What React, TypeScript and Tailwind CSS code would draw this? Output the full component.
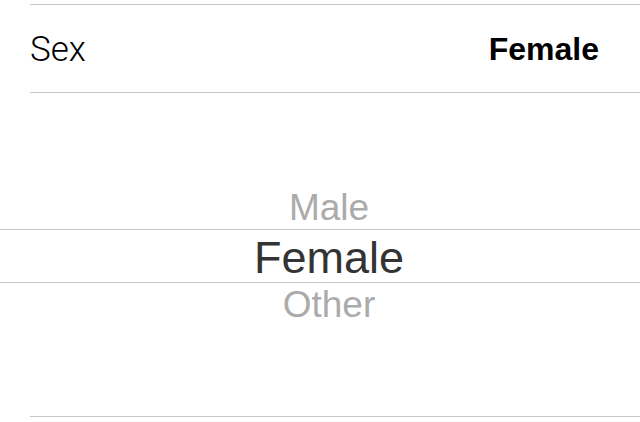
const options = ["Male", "Female", "Other"];

const SexPicker = () => {
  const selected = 1;

  return (
    <div className="w-[640px] h-[422px] overflow-hidden bg-white font-['Liberation_Sans',Arial,sans-serif]">
      <div className="h-[4px]" />
      {/* selected value row */}
      <div className="ml-[30px] h-[89px] border-y border-[#c8c7cc] flex items-center justify-between pr-[41px]">
        <span className="pt-[2px] text-[35px] leading-none font-light text-black font-['Roboto',sans-serif]">
          Sex
        </span>
        <span className="text-[32px] leading-none font-bold text-black">
          {options[selected]}
        </span>
      </div>

      {/* wheel */}
      <div className="h-[323px] flex flex-col items-center pt-[97px] pl-[18px]">
        <div className="mb-[3px] text-[37px] leading-[36px] text-[#ababab]">
          {options[0]}
        </div>
        <div className="-ml-[18px] w-[640px] h-[54px] border-y border-[#c8c7cc] flex justify-center pl-[18px]">
          <span className="pt-[3px] text-[45px] leading-[49px] text-[#333333]">
            {options[1]}
          </span>
        </div>
        <div className="mt-[4px] text-[37px] leading-[36px] text-[#ababab]">
          {options[2]}
        </div>
      </div>
      <div className="ml-[30px] border-b border-[#c8c7cc]" />
    </div>
  );
};

export default function App() {
  return <SexPicker />;
}
